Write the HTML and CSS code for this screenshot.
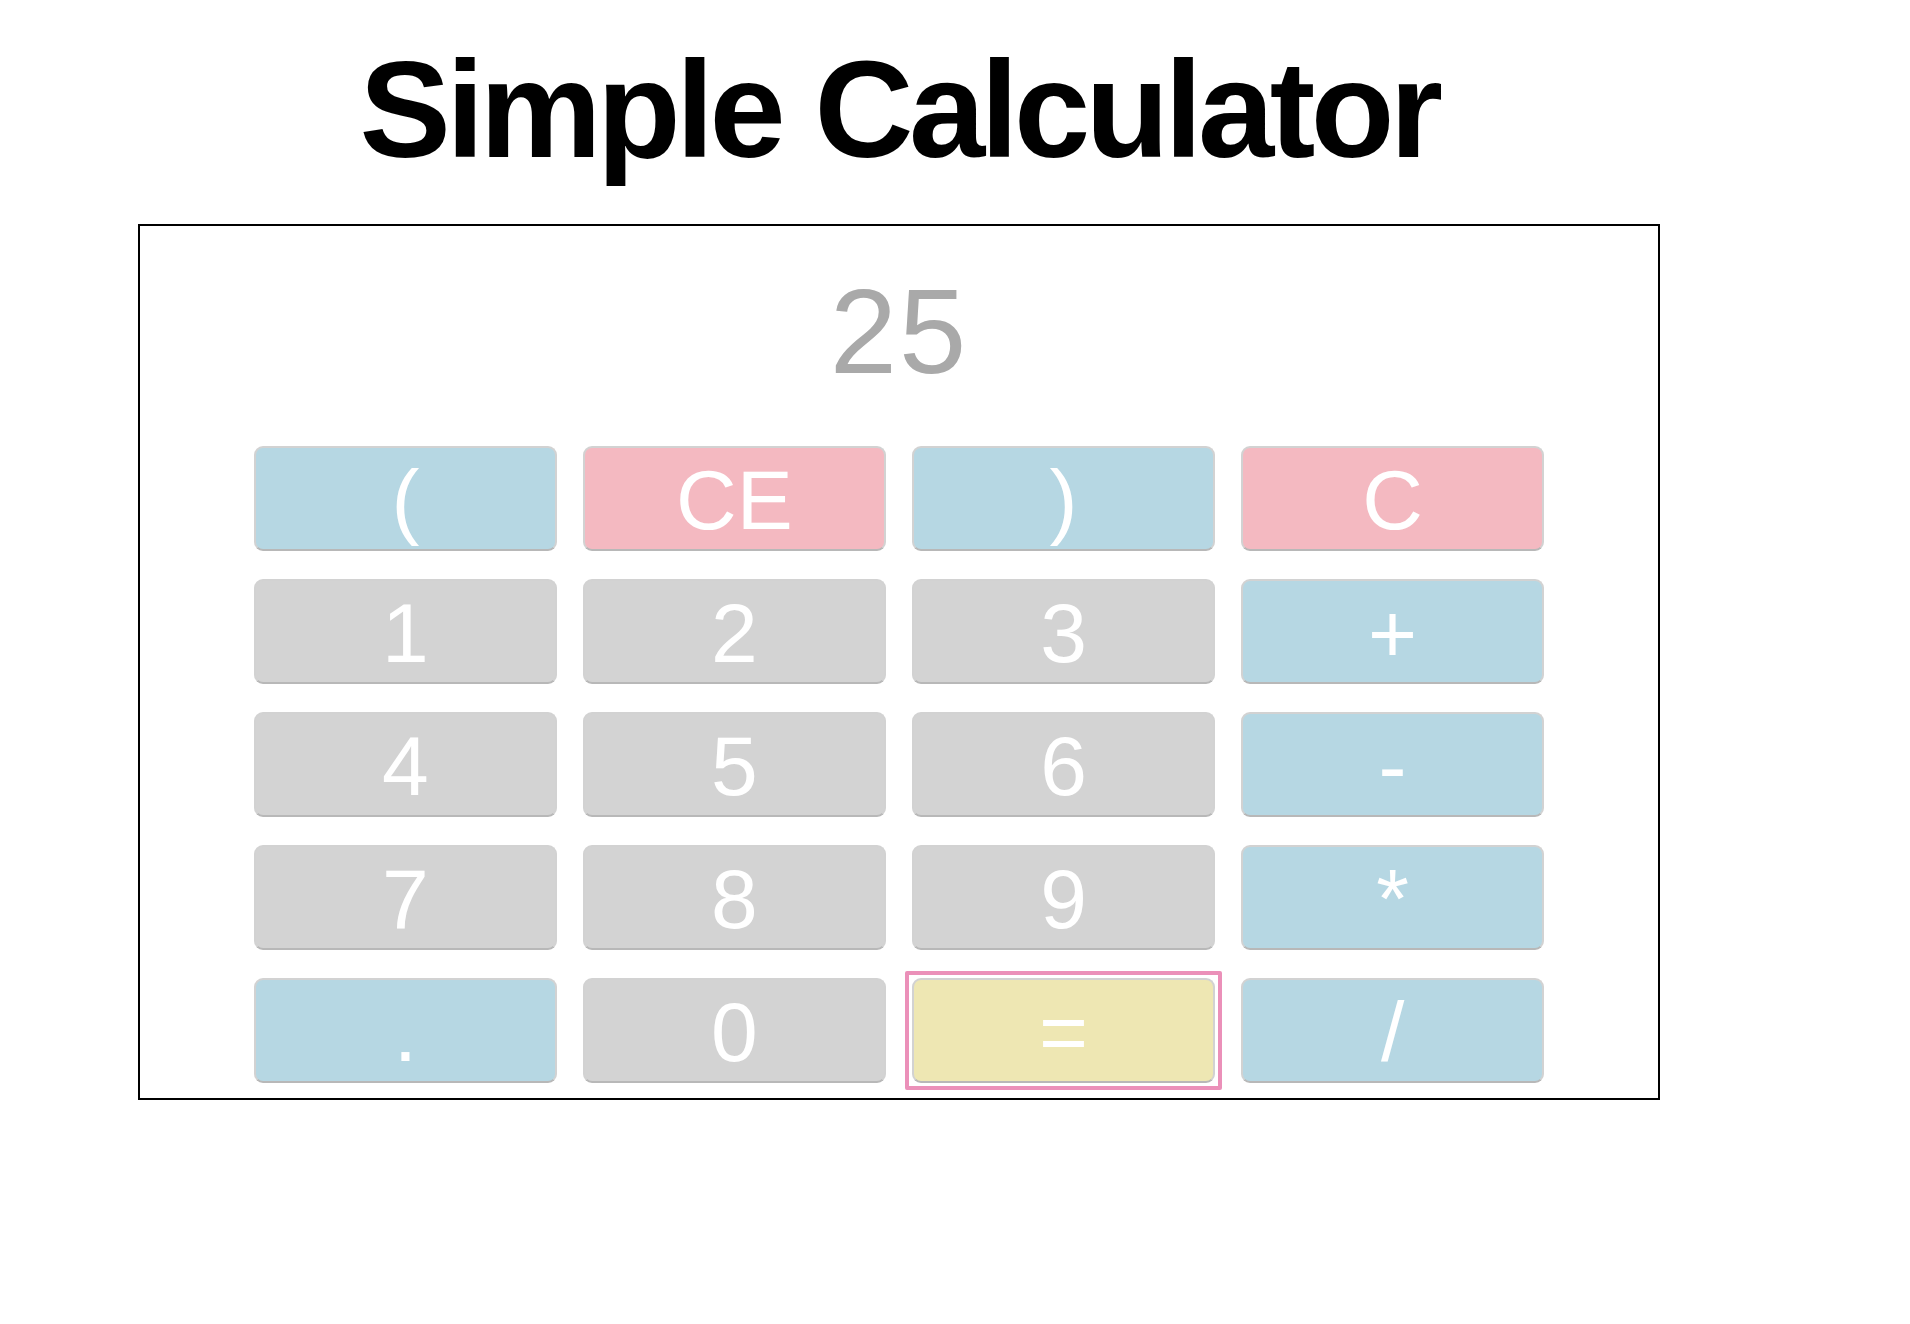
FILE: index.html
```html
<!DOCTYPE html>
<html lang="en">
<head>
<meta charset="utf-8">
<title>Simple Calculator</title>
<link rel="stylesheet" href="styles.css">
</head>
<body>
<div class="page">
  <h1 class="title">Simple Calculator</h1>
  <div class="calc">
    <div class="display">25</div>
    <div class="keys">
      <button class="key op">(</button>
      <button class="key clear">CE</button>
      <button class="key op">)</button>
      <button class="key clear">C</button>
      <button class="key num">1</button>
      <button class="key num">2</button>
      <button class="key num">3</button>
      <button class="key op">+</button>
      <button class="key num">4</button>
      <button class="key num">5</button>
      <button class="key num">6</button>
      <button class="key op">-</button>
      <button class="key num">7</button>
      <button class="key num">8</button>
      <button class="key num">9</button>
      <button class="key op">*</button>
      <button class="key op">.</button>
      <button class="key num">0</button>
      <button class="key eq focused">=</button>
      <button class="key op">/</button>
    </div>
  </div>
</div>
</body>
</html>
```
FILE: styles.css
```css
html, body {
  margin: 0;
  padding: 0;
  background: #ffffff;
}
body {
  font-family: "Liberation Sans", Arial, Helvetica, sans-serif;
}
.page {
  width: 1798px;
}
.title {
  margin: 0;
  padding-top: 35px;
  height: 150px;
  line-height: 150px;
  font-size: 137px;
  font-weight: bold;
  letter-spacing: -4.6px;
  text-align: center;
  color: #000;
  margin-bottom: 39px;
}
.calc {
  margin: 0 138px;
  border: 2px solid #000;
  padding: 40px 0 15px;
}
.display {
  height: 130px;
  line-height: 130px;
  font-size: 121px;
  letter-spacing: 2px;
  color: #a9a9a9;
  text-align: center;
  margin-bottom: 50px;
}
.keys {
  width: 85%;
  margin: 0 auto;
  display: grid;
  grid-template-columns: repeat(4, 1fr);
  grid-auto-rows: 105px;
  column-gap: 26px;
  row-gap: 28px;
}
.key {
  position: relative;
  box-sizing: border-box;
  height: 105px;
  margin: 0;
  padding: 3px 0 0;
  border: 2px solid #d2d2d2;
  border-bottom-color: #b8b8b8;
  border-radius: 9px;
  font-family: "Liberation Sans", Arial, Helvetica, sans-serif;
  font-size: 84px;
  line-height: 98px;
  color: #ffffff;
  text-align: center;
  cursor: pointer;
  outline: none;
}
.op {
  background: #b6d7e3;
}
.clear {
  background: #f4b9c1;
}
.num {
  background: #d3d3d3;
}
.eq {
  background: #eee7b3;
}
.focused::after {
  content: "";
  position: absolute;
  top: -9px;
  left: -9px;
  right: -9px;
  bottom: -9px;
  border: 4px solid #eb90b9;
  border-radius: 2px;
  pointer-events: none;
}
```
